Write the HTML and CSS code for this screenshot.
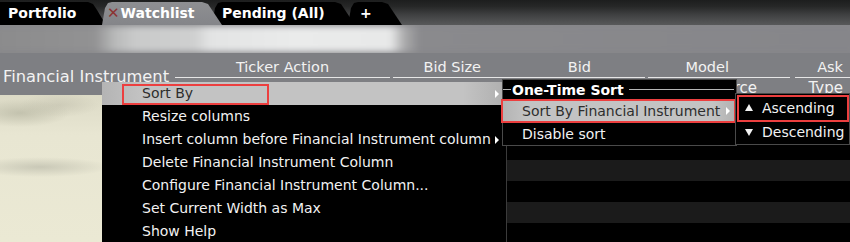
FILE: index.html
```html
<!DOCTYPE html>
<html>
<head>
<meta charset="utf-8">
<link rel="stylesheet" href="styles.css">
</head>
<body>
<div class="tabs">
  <div class="tab t-port">Portfolio</div>
  <div class="tab t-watch"><span class="close">✕</span>Watchlist</div>
  <div class="tab t-pend">Pending (All)</div>
  <div class="tab t-plus">+</div>
</div>
<div class="toolbar"><div class="band"></div></div>
<div class="header">
  <div class="fi">Financial Instrument</div>
  <div class="cols">
    <div class="row1">
      <div class="c c-ticker">Ticker Action</div>
      <div class="c c-bsize">Bid Size</div>
      <div class="c c-bid">Bid</div>
      <div class="c c-model">Model</div>
      <div class="c c-ask">Ask</div>
    </div>
    <div class="lines">
      <div class="seg s1"></div>
      <div class="seg s2"></div>
      <div class="seg s3"></div>
      <div class="seg s4"></div>
    </div>
    <div class="row2">
      <div class="c c-src">Source</div>
      <div class="c c-type">Type</div>
    </div>
  </div>
</div>
<div class="body">
  <div class="beige"></div>
  <div class="under"></div>
  <div class="rows">
    <div class="r"></div><div class="r alt"></div><div class="r"></div><div class="r alt"></div><div class="r"></div><div class="r alt"></div><div class="r"></div>
  </div>
</div>

<div class="menu menu1">
  <div class="item hl">Sort By<span class="arrow"></span><span class="redbox rb1"></span></div>
  <div class="item">Resize columns</div>
  <div class="item">Insert column before Financial Instrument column<span class="arrow"></span></div>
  <div class="item">Delete Financial Instrument Column</div>
  <div class="item">Configure Financial Instrument Column...</div>
  <div class="item">Set Current Width as Max</div>
  <div class="item">Show Help</div>
</div>

<div class="menu menu2">
  <div class="title"><span class="tl short"></span><span class="ttext">One-Time Sort</span><span class="tl long"></span></div>
  <div class="item hl">Sort By Financial Instrument<span class="arrow"></span><span class="redbox rb2"></span></div>
  <div class="item last">Disable sort</div>
</div>

<div class="menu menu3">
  <div class="item"><span class="tri up"></span>Ascending<span class="redbox rb3"></span></div>
  <div class="item"><span class="tri down"></span>Descending</div>
</div>
</body>
</html>
```
FILE: styles.css
```css
* { box-sizing: border-box; margin: 0; padding: 0; }
html, body { width: 850px; height: 242px; overflow: hidden; }
body {
  background: #000;
  font-family: "DejaVu Sans", Verdana, sans-serif;
  position: relative;
}

/* tabs */
.tabs {
  height: 25px;
  display: flex;
  padding-top: 2px;
  background: linear-gradient(#1d1e1e 0, #262727 25%, #404142 60%, #58595a 100%);
}
.tab {
  position: relative;
  height: 23px;
  color: #fff;
  font-weight: bold;
  font-size: 14px;
  line-height: 23px;
  background: #000;
  white-space: nowrap;
  clip-path: polygon(0 100%, 3px 6px, 6px 1px, 10px 0, calc(100% - 20px) 0, calc(100% - 14px) 2px, calc(100% - 10px) 8px, 100% 100%);
}
.t-port { width: 106px; padding-left: 8px; z-index: 3;
  clip-path: polygon(0 100%, 0 0, calc(100% - 18px) 0, calc(100% - 13px) 2px, calc(100% - 9px) 8px, 100% 100%); }
.t-watch { width: 120px; margin-left: -4px; padding-left: 5px; z-index: 5;
  background: linear-gradient(#8e8f92, #848589); }
.t-pend { width: 143px; margin-left: -10px; padding-left: 10px; z-index: 2; }
.t-plus { width: 54px; margin-left: -7px; padding-left: 12px; z-index: 1; }
.close { color: #8c3333; font-size: 15px; font-weight: bold; margin-right: 1px; }

/* toolbar */
.toolbar {
  height: 28px;
  background: #86868a;
  overflow: hidden;
  position: relative;
}
.band {
  height: 26px;
  margin-top: 1px;
  width: 860px;
  margin-left: -5px;
  filter: blur(3px);
  background: linear-gradient(to right,
    #8b8b8c 0, #929293 100px, #b9baba 120px, #c9caca 140px, #cfd0d0 200px,
    #e3e4e4 215px, #eaebeb 300px, #e8e9e9 395px, #a9a9aa 410px, #8a8a8d 425px, #86868a 860px);
}

/* header */
.header {
  height: 42px;
  background: #7e7f83;
  display: flex;
  color: #f2f2f2;
}
.fi {
  width: 175px;
  font-size: 16.3px;
  padding-left: 3px;
  padding-top: 14px;
  white-space: nowrap;
}
.cols { flex: 1; display: flex; flex-direction: column; }
.row1 { height: 24px; display: flex; font-size: 14.5px; line-height: 24px; padding-top: 2px; }
.c { white-space: nowrap; }
.c-ticker { width: 215px; text-align: center; }
.c-bsize { width: 95px; text-align: right; padding-right: 4px; }
.c-bid { width: 110px; text-align: right; padding-right: 4px; }
.c-model { width: 138px; text-align: right; padding-right: 4px; }
.c-ask { width: 117px; text-align: right; padding-right: 7px; }
.lines { height: 1px; display: flex; }
.seg { height: 1px; background: #e6e6e6; }
.s1 { width: 215px; }
.s2 { width: 252px; margin-left: 3px; }
.s3 { width: 142px; margin-left: 3px; }
.s4 { flex: 1; margin-left: 5px; }
.row2 { height: 17px; display: flex; font-size: 15px; line-height: 17px; padding-top: 2px; }
.c-src { width: 582px; text-align: right; }
.c-type { width: 93px; text-align: right; padding-right: 7px; }

/* body */
.body { height: 147px; display: flex; }
.beige {
  width: 102px;
  background:
    radial-gradient(ellipse 50px 14px at 20px 18px, rgba(170,170,150,0.55), rgba(170,170,150,0) 100%),
    radial-gradient(ellipse 40px 12px at 60px 10px, rgba(180,178,160,0.4), rgba(180,178,160,0) 100%),
    radial-gradient(ellipse 70px 10px at 40px 72px, rgba(175,175,160,0.55), rgba(175,175,160,0) 100%),
    linear-gradient(#dcdac6, #e8e6d2 40px, #ebe9d4);
}
.under { width: 404px; background: #000; }
.rows { flex: 1; border-left: 1px solid #3b3b3b; padding-top: 2px; }
.r { height: 21px; background: #000; }
.r.alt { background: #1b1b1b; }

/* menus */
.menu {
  position: absolute;
  background: #000;
  color: #f2f2f2;
  font-size: 14px;
}
.item {
  position: relative;
  white-space: nowrap;
}
.arrow {
  position: absolute;
  top: 50%;
  margin-top: -4px;
  width: 0; height: 0;
  border-left: 4px solid #fff;
  border-top: 4px solid transparent;
  border-bottom: 4px solid transparent;
}
.redbox {
  position: absolute;
  border: 2px solid #ec3f3f;
}
.hl { background: linear-gradient(to right, #b4b4b4, #c3c3c3 10%, #c3c3c3 90%, #b0b0b0); color: #2e2e2e; }

.menu1 { left: 102px; top: 82px; width: 401px; height: 162px; }
.menu1 .item { height: 23px; line-height: 23px; padding-left: 40px; }
.menu1 .arrow { right: 4px; }
.rb1 { left: 20px; top: 2px; width: 147px; height: 21px; }

.menu2 { left: 502px; top: 79px; width: 235px; height: 67px; border: 1px solid #4a4a4a; }
.menu2 .title { height: 19px; display: flex; align-items: center; font-weight: bold; color: #fff; }
.tl { height: 1px; background: #b5b5b5; }
.tl.short { width: 8px; }
.tl.long { flex: 1; margin-left: 5px; margin-right: 2px; }
.ttext { margin-left: 1px; }
.menu2 .item { height: 24px; line-height: 24px; padding-left: 19px; }
.menu2 .item.last { height: 22px; line-height: 22px; }
.menu2 .arrow { right: 6px; }
.rb2 { left: -2px; top: 0; right: 0; bottom: 0; }

.menu3 { left: 735px; top: 93px; width: 115px; height: 52px; border: 1px solid #4a4a4a; padding-top: 2px; }
.menu3 .item { height: 24px; line-height: 24px; padding-left: 26px; }
.rb3 { left: 1px; top: -1px; right: 0; bottom: -2px; }
.tri {
  position: absolute;
  left: 9px;
  top: 50%;
  width: 0; height: 0;
  border-left: 4px solid transparent;
  border-right: 4px solid transparent;
}
.tri.up { border-bottom: 7px solid #f2f2f2; margin-top: -4px; }
.tri.down { border-top: 7px solid #f2f2f2; margin-top: -3px; }
```
